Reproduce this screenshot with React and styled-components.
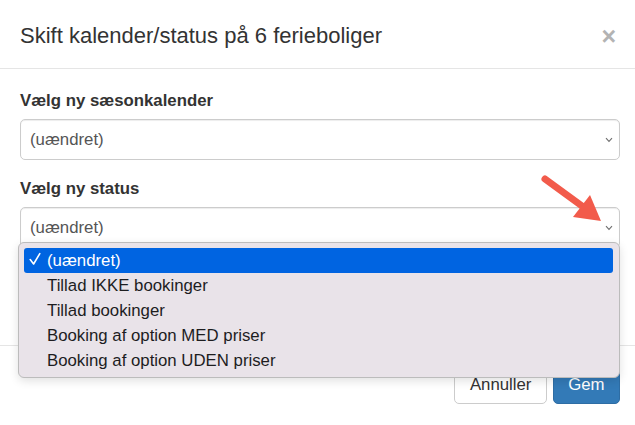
import styled, { createGlobalStyle } from "styled-components";

const GlobalStyle = createGlobalStyle`
  html, body {
    margin: 0;
    padding: 0;
    background: #fff;
    overflow: hidden;
  }
  body {
    font-family: "Liberation Sans", Arial, Helvetica, sans-serif;
  }
`;

const Modal = styled.div`
  position: relative;
  width: 640px;
  height: 425px;
  background: #fff;
  color: #333;
`;

const Header = styled.div`
  display: flex;
  align-items: center;
  justify-content: space-between;
  padding: 21px 20px 17px;
  border-bottom: 1px solid #e5e5e5;
`;

const Title = styled.h4`
  margin: 0;
  font-size: 22px;
  font-weight: normal;
  line-height: 30px;
`;

const Close = styled.span`
  margin-right: 4px;
  font-size: 25px;
  font-weight: bold;
  line-height: 1;
  color: #b3b3b3;
`;

const Body = styled.div`
  box-sizing: border-box;
  min-height: 276px;
  padding: 20px 20px 0;
`;

const FormGroup = styled.div`
  margin-bottom: 17px;
`;

const Label = styled.label`
  display: block;
  margin-bottom: 6px;
  font-size: 16.8px;
  font-weight: bold;
  line-height: 24px;
`;

const SelectWrap = styled.div`
  position: relative;
`;

const SelectBox = styled.div`
  box-sizing: border-box;
  height: 41px;
  display: flex;
  align-items: center;
  justify-content: space-between;
  padding: 0 6px 0 9px;
  border: 1px solid #ccc;
  border-radius: 5px;
  box-shadow: inset 0 1px 1px rgba(0, 0, 0, 0.075);
  font-size: 16.8px;
  color: #555;
`;

const Menu = styled.ul`
  position: absolute;
  top: 35px;
  left: -2px;
  right: 0;
  margin: 0;
  padding: 5px 6px 4px 5px;
  list-style: none;
  background: #e9e3e9;
  border: 1px solid #bcbcbc;
  border-radius: 6px;
  box-shadow: 0 3px 10px rgba(0, 0, 0, 0.12);
  z-index: 2;
`;

const MenuItem = styled.li`
  display: grid;
  grid-template-columns: 18px 1fr;
  align-items: center;
  height: 25px;
  padding-left: 5px;
  border-radius: 3px;
  font-size: 16.8px;
  color: ${(p) => (p.$active ? "#fff" : "#1d1d1f")};
  background: ${(p) => (p.$active ? "#0064e1" : "transparent")};
`;

const Footer = styled.div`
  display: flex;
  justify-content: flex-end;
  gap: 6px;
  padding: 18px 20px;
  border-top: 1px solid #e5e5e5;
`;

const Button = styled.button`
  font-family: inherit;
  font-size: 16.8px;
  line-height: 24px;
  padding: 8px 14.4px 6px;
  border-radius: 5px;
  border: 1px solid ${(p) => (p.$primary ? "#2e6da4" : "#ccc")};
  background: ${(p) => (p.$primary ? "#337ab7" : "#fff")};
  color: ${(p) => (p.$primary ? "#fff" : "#333")};
`;

const Pointer = styled.svg`
  position: absolute;
  left: 538px;
  top: 172px;
  pointer-events: none;
  z-index: 3;
`;

const Chevron = () => (
  <svg width="8" height="6" viewBox="0 0 8 6">
    <path d="M1 1.2 L4 4.4 L7 1.2" fill="none" stroke="#6f6f6f" strokeWidth="1.1" />
  </svg>
);

const Check = () => (
  <svg width="12" height="14" viewBox="0 0 12 14">
    <path d="M1.2 7.6 L4.6 12 L10.8 1.6" fill="none" stroke="#fff" strokeWidth="1.6" strokeLinecap="round" strokeLinejoin="round" />
  </svg>
);

const options = [
  "(uændret)",
  "Tillad IKKE bookinger",
  "Tillad bookinger",
  "Booking af option MED priser",
  "Booking af option UDEN priser",
];

export default function App() {
  return (
    <>
      <GlobalStyle />
      <Modal>
        <Header>
          <Title>Skift kalender/status på 6 ferieboliger</Title>
          <Close>×</Close>
        </Header>
        <Body>
          <FormGroup>
            <Label>Vælg ny sæsonkalender</Label>
            <SelectBox>
              (uændret)
              <Chevron />
            </SelectBox>
          </FormGroup>
          <FormGroup>
            <Label>Vælg ny status</Label>
            <SelectWrap>
              <SelectBox>
                (uændret)
                <Chevron />
              </SelectBox>
              <Menu>
                {options.map((o, i) => (
                  <MenuItem key={o} $active={i === 0}>
                    <span>{i === 0 && <Check />}</span>
                    <span>{o}</span>
                  </MenuItem>
                ))}
              </Menu>
            </SelectWrap>
          </FormGroup>
        </Body>
        <Footer>
          <Button>Annuller</Button>
          <Button $primary>Gem</Button>
        </Footer>
        <Pointer width="70" height="56" viewBox="0 0 70 56">
          <line x1="7" y1="7" x2="44" y2="34" stroke="#f25b4b" strokeWidth="7" strokeLinecap="round" />
          <polygon points="63,49 35,45 52,23" fill="#f25b4b" />
        </Pointer>
      </Modal>
    </>
  );
}
